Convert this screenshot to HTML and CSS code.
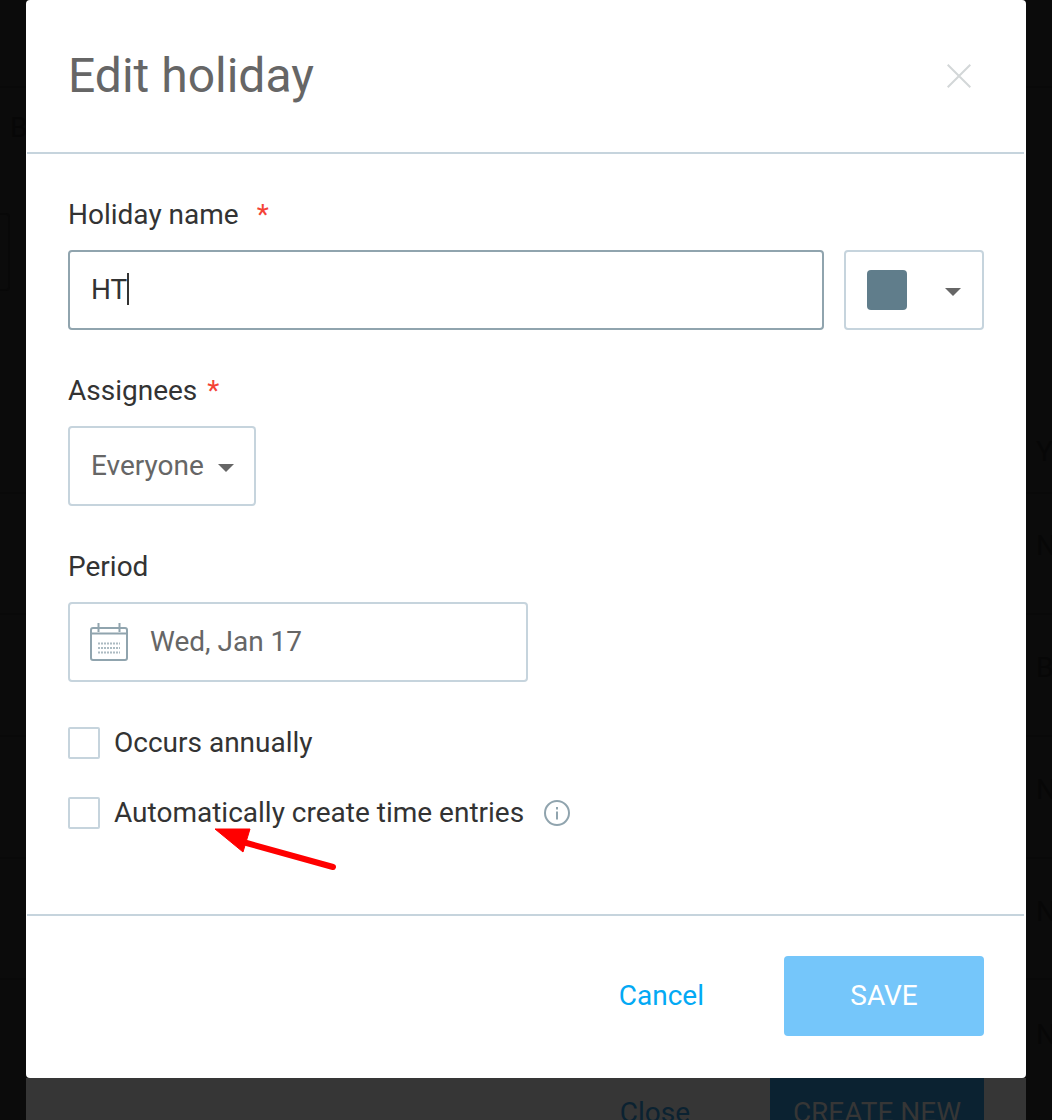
FILE: index.html
```html
<!DOCTYPE html>
<html lang="en">
<head>
<meta charset="utf-8">
<title>Edit holiday</title>
<link rel="stylesheet" href="styles.css">
</head>
<body>
<div class="backdrop" aria-hidden="true">
  <span class="ghost-line gl-1"></span>
  <span class="ghost-line gl-2"></span>
  <span class="ghost-line gl-3"></span>
  <span class="ghost-line gl-4"></span>
  <span class="ghost-line gl-5"></span>
  <span class="ghost-line gl-6"></span>
  <span class="ghost-box"></span>
  <span class="ghost-letter gb-left">B</span>
  <span class="ghost-letter g-1">Y</span>
  <span class="ghost-letter g-2">N</span>
  <span class="ghost-letter g-3">B</span>
  <span class="ghost-letter g-4">N</span>
  <span class="ghost-letter g-5">N</span>
  <span class="ghost-letter g-6">N</span>
</div>
<main class="modal">
  <header class="modal-head">
    <h1 class="modal-title">Edit holiday</h1>
    <svg class="close-icon" width="24" height="24" viewBox="0 0 24 24"><path d="M.7.7l22.6 22.6M23.3.7L.7 23.3" fill="none" stroke="#d3d7d8" stroke-width="2"/></svg>
  </header>
  <div class="modal-rule"></div>
  <section class="modal-body">
    <div class="group">
      <div class="label">Holiday name<span class="req req-wide">*</span></div>
      <div class="name-row">
        <div class="field field-focus field-grow"><span class="value-dark">HT</span><span class="text-caret"></span></div>
        <div class="field color-field"><span class="swatch"></span><span class="caret"></span></div>
      </div>
    </div>
    <div class="group">
      <div class="label">Assignees<span class="req">*</span></div>
      <div class="field assignee-field"><span class="value">Everyone</span><span class="caret"></span></div>
    </div>
    <div class="group">
      <div class="label">Period</div>
      <div class="field period-field">
        <svg class="cal-icon" width="38" height="38" viewBox="0 0 38 38" fill="none" stroke="#90a4ae">
          <rect x="1" y="5" width="36" height="32" rx="2" stroke-width="2"/>
          <path d="M1 10.5h36" stroke-width="2"/>
          <path d="M8.5 0v9M29.5 0v9" stroke-width="2"/>
          <path d="M8 20.5h22M8 25h22M8 29.5h22" stroke-width="2" stroke-dasharray="2 1" stroke-opacity=".75"/>
        </svg>
        <span class="value">Wed, Jan 17</span>
      </div>
    </div>
    <label class="check-row check-first"><span class="checkbox"></span><span class="check-text">Occurs annually</span></label>
    <label class="check-row"><span class="checkbox"></span><span class="check-text">Automatically create time entries</span>
      <svg class="info-icon" width="26" height="26" viewBox="0 0 26 26" fill="none" stroke="#90a4ae" stroke-width="2"><circle cx="13" cy="13" r="12"/><path d="M13 11.5v8M13 7v2.4"/></svg>
    </label>
    <svg class="arrow" width="130" height="50" viewBox="0 0 130 50"><path d="M2 1h35l-7 23z" fill="#f00" stroke="#f00" stroke-width="1"/><path d="M30 14l90 25" fill="none" stroke="#f00" stroke-width="6" stroke-linecap="round"/></svg>
  </section>
  <div class="modal-rule"></div>
  <footer class="modal-foot">
    <a class="cancel">Cancel</a>
    <button class="save" type="button">SAVE</button>
  </footer>
</main>
<div class="under-foot">
  <span class="under-close">Close</span>
  <span class="under-create">CREATE NEW</span>
</div>
</body>
</html>
```
FILE: styles.css
```css
* { box-sizing: border-box; }
html, body { margin: 0; height: 1120px; overflow: hidden; }
body {
  position: relative;
  background: #0b0b0b;
  font-family: Roboto, "Liberation Sans", sans-serif;
  font-size: 28px;
  color: #333;
}
.backdrop { position: absolute; inset: 0; overflow: hidden; }
.ghost-line { position: absolute; height: 2px; background: #090909; left: 0; right: 0; }
.gl-1 { top: 86px; }
.gl-2 { top: 492px; }
.gl-3 { top: 613px; }
.gl-4 { top: 735px; }
.gl-5 { top: 857px; }
.gl-6 { top: 978px; }
.ghost-box { position: absolute; left: -10px; top: 213px; width: 20px; height: 78px; border: 2px solid #080808; border-radius: 4px; }
.ghost-letter { position: absolute; color: #070707; font-size: 28px; line-height: 32px; left: 1036px; }
.gb-left { left: 10px; top: 112px; }
.g-1 { top: 436px; }
.g-2 { top: 530px; }
.g-3 { top: 652px; }
.g-4 { top: 774px; }
.g-5 { top: 896px; }
.g-6 { top: 1019px; }

.modal {
  position: relative;
  width: 1000px;
  height: 1078px;
  margin: 0 0 0 26px;
  background: #fff;
  border-radius: 4px;
  display: flex;
  flex-direction: column;
}
.modal-head {
  height: 152px;
  flex: none;
  padding: 0 55px 0 42px;
  display: flex;
  align-items: center;
  justify-content: space-between;
}
.modal-title { margin: 0; font-size: 48px; line-height: 56px; font-weight: 400; color: #666; }
.modal-rule { height: 2px; margin: 0 2px 0 1px; background: #c6d4dd; flex: none; }
.modal-body {
  position: relative;
  flex: 1;
  padding: 44px 42px 0;
  display: flex;
  flex-direction: column;
  gap: 44px;
}
.group { display: flex; flex-direction: column; gap: 20px; }
.label { font-size: 28px; line-height: 32px; color: #333; padding-top: 1px; margin-bottom: -1px; }
.req { color: #f44336; margin-left: 10px; }
.req-wide { margin-left: 18px; }
.name-row { display: flex; gap: 20px; }
.field {
  height: 80px;
  border: 2px solid #c6d4dd;
  border-radius: 4px;
  background: #fff;
  display: flex;
  align-items: center;
  padding: 0 21px;
  font-size: 28px;
}
.field-focus { border-color: #90a4ae; }
.field-grow { flex: 1; }
.value-dark { color: #333; margin-bottom: 2px; }
.value { color: #666; margin-bottom: 2px; }
.text-caret { width: 2px; height: 32px; background: #333; margin-bottom: 2px; }
.color-field { width: 140px; padding: 0 21px 0 21px; justify-content: space-between; }
.swatch { width: 40px; height: 40px; border-radius: 4px; background: #607d8b; }
.caret { width: 0; height: 0; border-left: 8px solid transparent; border-right: 8px solid transparent; border-top: 8px solid #666; margin-top: 4px; }
.assignee-field { width: 188px; padding-right: 20px; justify-content: space-between; }
.period-field { width: 460px; gap: 22px; padding-left: 20px; }
.cal-icon { flex: none; }
.check-row { display: flex; align-items: center; gap: 14px; height: 32px; margin-top: -6px; }
.check-first { margin-top: 1px; margin-bottom: 0; }
.checkbox { width: 32px; height: 32px; border: 2px solid #c6d4dd; border-radius: 2px; flex: none; }
.check-text { font-size: 28px; color: #333; margin-bottom: 2px; }
.info-icon { margin-left: 6px; }
.arrow { position: absolute; left: 187px; top: 674px; }
.modal-foot {
  flex: none;
  padding: 40px 42px 42px;
  display: flex;
  align-items: center;
  justify-content: flex-end;
  gap: 80px;
}
.cancel { color: #03a9f4; font-size: 28px; margin-bottom: 2px; }
.save {
  width: 200px;
  height: 80px;
  border: 0;
  border-radius: 4px;
  background: #75c6fa;
  color: #fff;
  padding: 0 0 2px;
  font: 400 28px Roboto, "Liberation Sans", sans-serif;
}
.under-foot {
  position: relative;
  width: 1000px;
  height: 42px;
  margin-left: 26px;
  padding-right: 42px;
  background: #363636;
  display: flex;
  justify-content: flex-end;
  align-items: flex-start;
  gap: 80px;
  overflow: hidden;
}
.under-close { color: #0b2231; margin-top: 19px; line-height: 32px; }
.under-create { width: 214px; height: 80px; background: #0b2231; color: #363636; text-align: center; padding-top: 19px; line-height: 32px; }
```
